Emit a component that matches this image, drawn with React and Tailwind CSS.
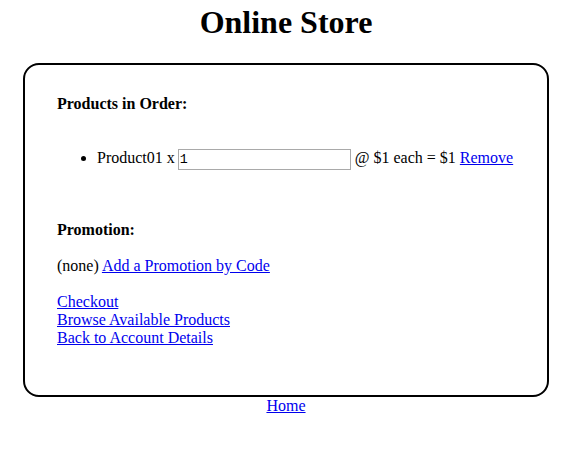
export default function App() {
  return (
    <div className="ml-[4px] w-[564px] bg-white font-['Liberation_Serif',serif] text-[16px] text-black">
      <h1 className="pt-[4px] text-center text-[32px] font-bold leading-[37px]">Online Store</h1>

      <div className="mx-auto mt-[22px] w-[526px] rounded-[16px] border-2 border-black pl-[32px] pt-[30px] pb-[48px] leading-[18px]">
        <h4 className="font-bold">Products in Order:</h4>

        <ul className="mt-[34px] list-disc pl-[40px]">
          <li className="leading-[21px]">
            Product01 x{" "}
            <input
              type="text"
              defaultValue="1"
              className="-ml-[1px] h-[21px] w-[173px] border border-[#a9a9a9] px-[1px] align-baseline font-['Liberation_Mono',monospace] text-[13.33px] outline-none"
            />{" "}
            @ $1 each = $1{" "}
            <a href="#" className="text-[#0000ee] underline">
              Remove
            </a>
          </li>
        </ul>

        <h4 className="mt-[51px] font-bold">Promotion:</h4>

        <p className="mt-[18px]">
          (none){" "}
          <a href="#" className="text-[#0000ee] underline">
            Add a Promotion by Code
          </a>
        </p>

        <div className="mt-[18px] flex flex-col items-start">
          <a href="#" className="text-[#0000ee] underline">
            Checkout
          </a>
          <a href="#" className="text-[#0000ee] underline">
            Browse Available Products
          </a>
          <a href="#" className="text-[#0000ee] underline">
            Back to Account Details
          </a>
        </div>
      </div>

      <div className="text-center leading-[18px]">
        <a href="#" className="text-[#0000ee] underline">
          Home
        </a>
      </div>
    </div>
  );
}
